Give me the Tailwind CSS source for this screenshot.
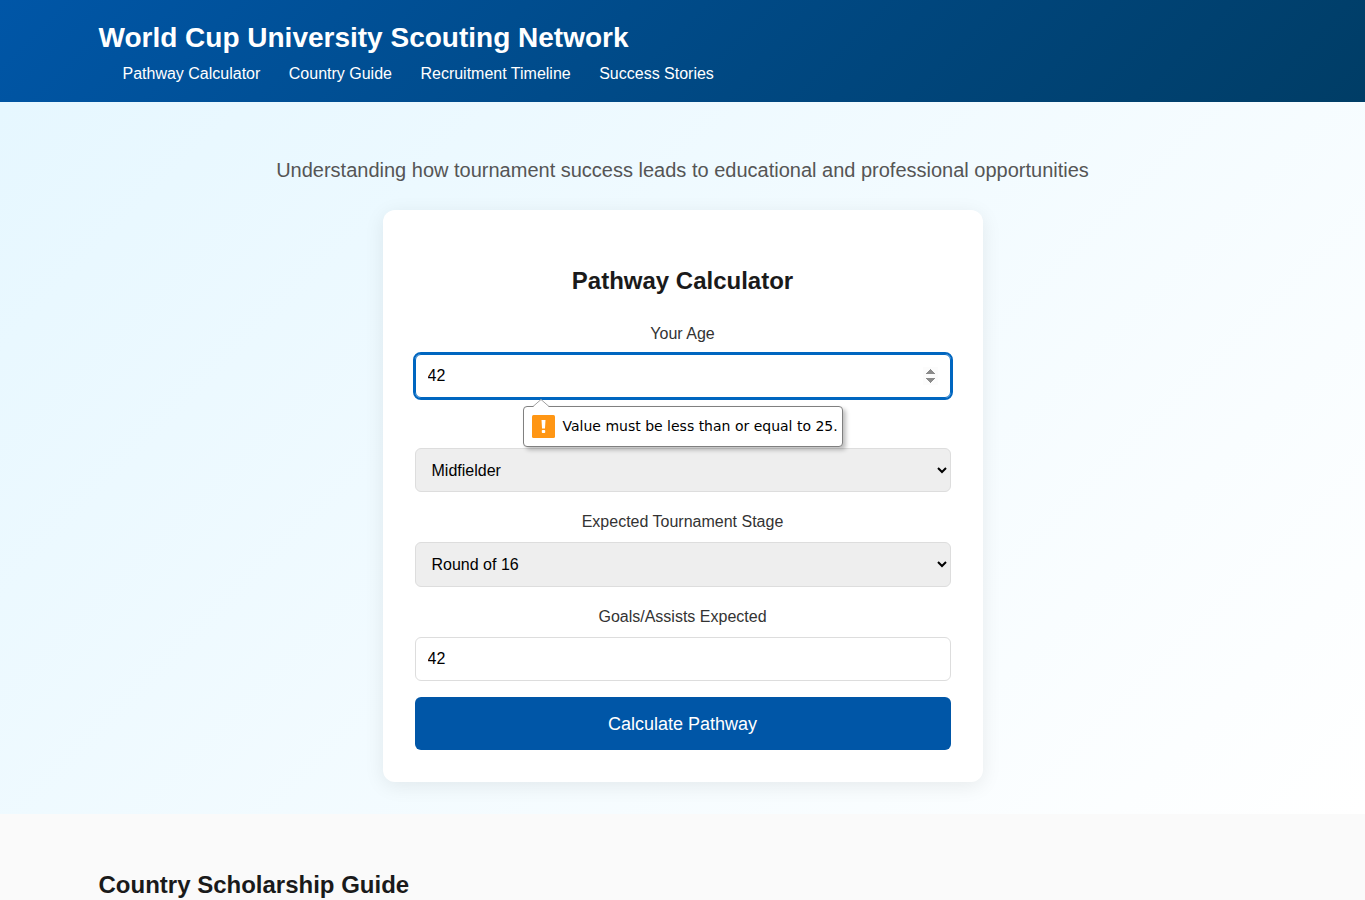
<!DOCTYPE html>
<html lang="en">
<head>
    <meta charset="UTF-8">
    <meta name="viewport" content="width=device-width, initial-scale=1.0">
    <title>World Cup University Scouting Network</title>
    <script src="https://cdn.jsdelivr.net/npm/@tailwindcss/browser@4"></script>
    <style>
        body { font-family: "Liberation Sans", Arial, sans-serif; }
        /* keep the stepper visible on the age field */
        #age::-webkit-inner-spin-button { opacity: 1; }
    </style>
</head>
<body class="bg-[#fafafa] text-[#1a1a1a]">

    <header class="bg-linear-135 from-[#0056a7] to-[#003d66] text-white pt-4 pb-3.5">
        <div class="max-w-[1200px] mx-auto px-4">
            <h1 class="text-[28px] leading-11 font-bold">World Cup University Scouting Network</h1>
            <nav class="leading-7">
                <a href="#calculator" class="ml-6">Pathway Calculator</a>
                <a href="#guide" class="ml-6">Country Guide</a>
                <a href="#timeline" class="ml-6">Recruitment Timeline</a>
                <a href="#stories" class="ml-6">Success Stories</a>
            </nav>
        </div>
    </header>

    <main>
        <section id="calculator" class="bg-linear-135 from-[#e6f7ff] to-white px-4 pt-13 pb-8 text-center">
            <p class="text-xl leading-8 text-[#555] mb-6">Understanding how tournament success leads to educational and professional opportunities</p>

            <div class="max-w-[600px] mx-auto bg-white rounded-xl px-8 pt-13 pb-8 shadow-[0_4px_20px_rgba(0,0,0,0.08)]">
                <h2 class="text-2xl leading-[38px] font-bold mb-5">Pathway Calculator</h2>

                <form class="text-base" novalidate>
                    <div class="relative mb-4">
                        <label for="age" class="block leading-7 mb-1.5 text-[#333]">Your Age</label>
                        <input type="number" id="age" value="42" min="16" max="25" class="block w-full h-11 px-3 bg-white text-black border border-[#0066c0] rounded-md outline-2 outline-[#0066c0]">

                        <!-- Validation bubble -->
                        <div role="alert" class="absolute z-10 top-full left-1/2 -translate-x-1/2 mt-2 flex items-center gap-2 w-80 h-[41px] pl-2 bg-white border border-[#808080] rounded-sm shadow-[3px_3px_4px_rgba(0,0,0,0.25)] whitespace-nowrap">
                            <svg class="absolute left-2 -top-2" width="18" height="9" viewBox="0 0 18 9">
                                <path d="M0 9 L1 8 L9 0.5 L17 8 L18 9 Z" fill="#fff"/>
                                <path d="M1 7.5 L9 0.5 L17 7.5" fill="none" stroke="#a0a0a0"/>
                            </svg>
                            <svg width="23" height="23" viewBox="0 0 23 23">
                                <rect width="23" height="23" rx="1.5" fill="#ff9614"/>
                                <path d="M9.5 5 H13.5 L13 13.5 H10 Z" fill="#fff"/>
                                <rect x="9.8" y="15" width="3.4" height="3" rx="0.8" fill="#fff"/>
                            </svg>
                            <span class="text-sm leading-5 pb-0.5 text-black font-['DejaVu_Sans',sans-serif]">Value must be less than or equal to 25.</span>
                        </div>
                    </div>

                    <div class="mb-4">
                        <!-- hidden while the bubble covers it -->
                        <label for="position" class="invisible block leading-7 mb-1.5 text-[#333]">Position</label>
                        <select id="position" class="block w-full h-11 px-3 bg-[#eee] text-black border border-[#ddd] rounded-md">
                            <option>Midfielder</option>
                        </select>
                    </div>

                    <div class="mb-4">
                        <label for="stage" class="block leading-7 mb-1.5 text-[#333]">Expected Tournament Stage</label>
                        <select id="stage" class="block w-full h-[45px] px-3 bg-[#eee] text-black border border-[#ddd] rounded-md">
                            <option>Round of 16</option>
                        </select>
                    </div>

                    <div class="mb-4">
                        <label for="goals" class="block leading-7 mb-1.5 text-[#333]">Goals/Assists Expected</label>
                        <input type="number" id="goals" value="42" class="block w-full h-11 px-3 bg-white text-black border border-[#ddd] rounded-md">
                    </div>

                    <button type="submit" class="block w-full h-[53px] bg-[#0056a7] text-white text-lg rounded-md">Calculate Pathway</button>
                </form>
            </div>
        </section>

        <section id="guide" class="max-w-[1200px] mx-auto px-4 pt-13">
            <h2 class="text-2xl leading-[38px] font-bold">Country Scholarship Guide</h2>
        </section>
    </main>

</body>
</html>
